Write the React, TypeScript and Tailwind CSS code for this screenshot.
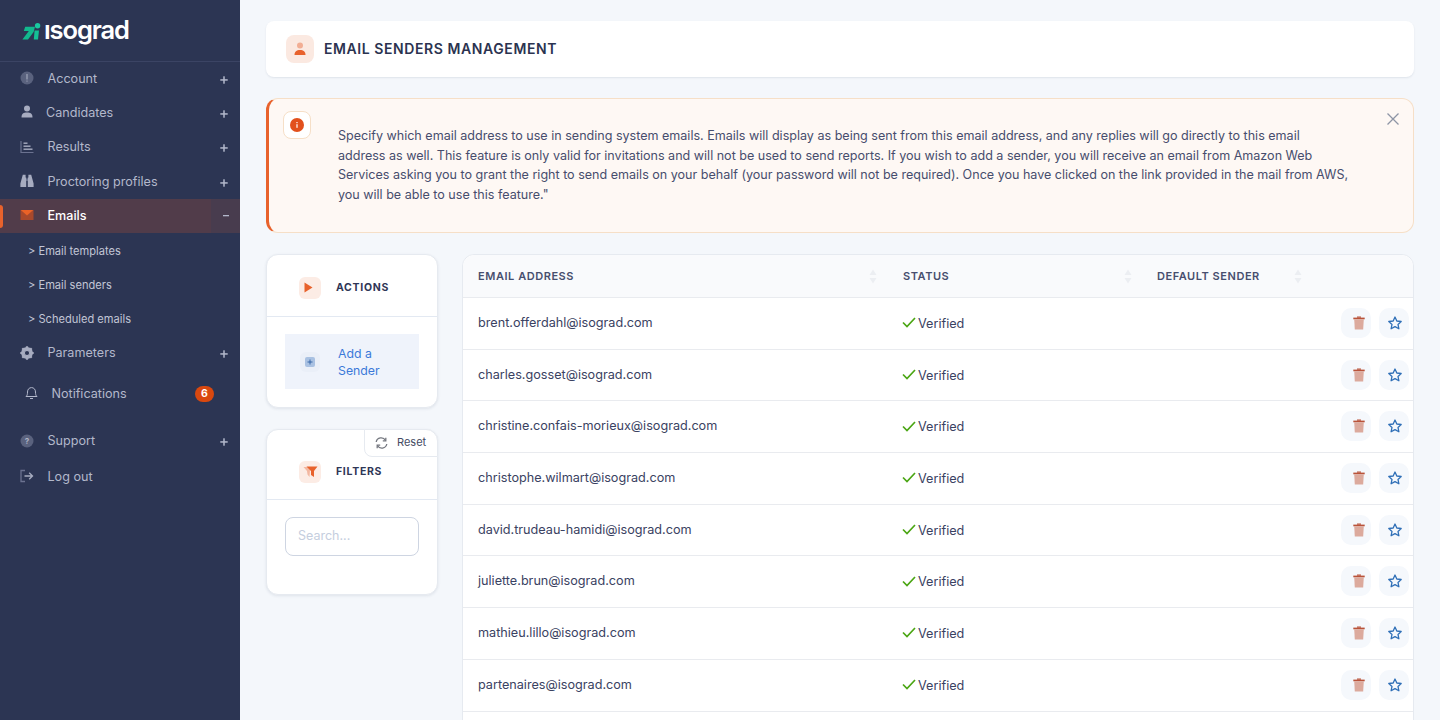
import React from "react";

const Plus = () => (
  <svg width="8" height="8" viewBox="0 0 8 8" className="mt-[1px] mr-[1px] shrink-0">
    <rect x="0.3" y="3.2" width="7.4" height="1.5" fill="currentColor" />
    <rect x="3.25" y="0.3" width="1.5" height="7.4" fill="currentColor" />
  </svg>
);

const Logo = () => (
  <div className="flex items-center">
    <svg width="19" height="17" viewBox="0 0 19 17" className="mt-[3px] mr-[3px] shrink-0">
      <circle cx="15.6" cy="2.8" r="2.7" fill="#19c9a0" />
      <path d="M3.2 3.8 H13 L11.6 9 L6 16.5 H0.4 L6.8 8 H1.8 Z" fill="#12b98e" />
      <path d="M12.6 7.4 H17 L16 16.5 H11.8 Z" fill="#14c096" />
    </svg>
    <span className="text-[25.5px] leading-none font-semibold tracking-[-1.1px] text-white">ısograd</span>
  </div>
);

const Svg = ({ children, s = 14 }: { children: React.ReactNode; s?: number }) => (
  <svg width={s} height={s} viewBox="0 0 14 14" className="shrink-0">
    {children}
  </svg>
);

const icons: Record<string, React.ReactNode> = {
  info: (
    <Svg>
      <circle cx="7" cy="7" r="6.5" fill="#5a627e" />
      <rect x="6.5" y="3" width="1" height="5.5" fill="#aeb3c6" />
      <rect x="6.5" y="9.6" width="1" height="1" fill="#aeb3c6" />
    </Svg>
  ),
  user: (
    <Svg>
      <circle cx="7" cy="3.4" r="3" fill="#a7acc0" />
      <path d="M1.5 12.5 C1.5 8.5 3.5 7.5 7 7.5 C10.5 7.5 12.5 8.5 12.5 12.5 Z" fill="#a7acc0" />
    </Svg>
  ),
  chart: (
    <Svg>
      <path d="M1 1 V12.5 H13.5" stroke="#6b7290" strokeWidth="1.2" fill="none" />
      <rect x="3.5" y="2.5" width="4" height="1.4" fill="#a7acc0" />
      <rect x="3.5" y="5.5" width="7" height="1.4" fill="#a7acc0" />
      <rect x="3.5" y="8.5" width="9" height="1.4" fill="#a7acc0" />
    </Svg>
  ),
  binoculars: (
    <Svg>
      <path d="M2.8 0.8 H5.6 V3.6 H6.2 V13 H0.4 V9.5 Z" fill="#a7acc0" />
      <path d="M11.2 0.8 H8.4 V3.6 H7.8 V13 H13.6 V9.5 Z" fill="#a7acc0" />
      <rect x="6.2" y="4.5" width="1.6" height="2.5" fill="#777e98" />
    </Svg>
  ),
  mail: (
    <Svg>
      <path d="M0.5 2 H13.5 V12 H0.5 Z" fill="#a8492c" />
      <path d="M0.8 2 H13.2 L7 7.6 Z" fill="#ea6227" />
    </Svg>
  ),
  gear: (
    <Svg>
      <circle cx="7" cy="7" r="4.5" fill="none" stroke="#a7acc0" strokeWidth="2.8" />
      <path
        d="M7 0.3 V13.7 M0.3 7 H13.7 M2.3 2.3 L11.7 11.7 M11.7 2.3 L2.3 11.7"
        stroke="#a7acc0"
        strokeWidth="2.2"
      />
      <circle cx="7" cy="7" r="2.1" fill="#2c3553" />
    </Svg>
  ),
  help: (
    <Svg>
      <circle cx="7" cy="7" r="6.5" fill="#5a627e" />
      <text x="7" y="10" textAnchor="middle" fontSize="8" fontWeight="700" fill="#aeb3c6" fontFamily="Inter, sans-serif">
        ?
      </text>
    </Svg>
  ),
  logout: (
    <Svg>
      <path d="M5 1.5 H1 V12.5 H5" stroke="#6b7290" strokeWidth="1.3" fill="none" />
      <path d="M4.5 7 H12.5 M9.2 3.8 L12.5 7 L9.2 10.2" stroke="#a7acc0" strokeWidth="1.3" fill="none" />
    </Svg>
  ),
};

const NavItem = ({ icon, label, tight = false }: { icon: string; label: string; tight?: boolean }) => (
  <div className="flex h-[34.3px] items-center pr-[11px] pl-5 text-[#b3b8cb]">
    <span className="mb-[2px] shrink-0">{icons[icon]}</span>
    <span className={tight ? "ml-[12px] flex-1 text-[12.6px]" : "ml-[13.5px] flex-1 text-[12.6px]"}>{label}</span>
    <Plus />
  </div>
);

const SubItem = ({ label }: { label: string }) => (
  <div className="flex h-[34px] items-center pl-[28px] text-[11.1px] text-[#c2c6d6]">&gt; {label}</div>
);

const Sidebar = () => (
  <aside className="flex h-[720px] w-[240px] shrink-0 flex-col bg-[#2c3553]">
    <div className="flex h-[62px] items-center border-b border-[#3b4464] pb-[1px] pl-[22px]">
      <Logo />
    </div>
    <div>
      <NavItem icon="info" label="Account" />
      <NavItem icon="user" label="Candidates" tight />
      <NavItem icon="chart" label="Results" />
      <NavItem icon="binoculars" label="Proctoring profiles" />
      <div className="relative flex h-[34.3px] items-center bg-[#513c4a] pl-5 text-white">
        <span className="absolute top-[6px] left-0 h-[23px] w-[3px] rounded-r-sm bg-[#e8622c]" />
        <span className="mb-[2px] shrink-0">{icons.mail}</span>
        <span className="ml-[13.5px] flex-1 text-[12.6px] font-medium">Emails</span>
        <span className="flex h-full w-[29px] items-center justify-center bg-[#483c4e] text-[#b3b8cb]">
          <svg width="6" height="2" viewBox="0 0 6 2">
            <rect width="6" height="1.3" fill="currentColor" />
          </svg>
        </span>
      </div>
      <div className="pt-[1px]">
        <SubItem label="Email templates" />
        <SubItem label="Email senders" />
        <SubItem label="Scheduled emails" />
      </div>
      <NavItem icon="gear" label="Parameters" />
      <div className="mt-[6px] flex h-[34px] items-center pr-[26px] pl-[25px] text-[#b3b8cb]">
        <svg width="13" height="14" viewBox="0 0 13 14" fill="none" stroke="#b3b8cb" strokeWidth="1" className="mb-[1px] shrink-0">
          <path d="M1 10.5 C2.3 9.5 2.5 8 2.5 6 C2.5 3.4 4.2 1.6 6.5 1.6 C8.8 1.6 10.5 3.4 10.5 6 C10.5 8 10.7 9.5 12 10.5 Z" />
          <path d="M5 12.5 H8" />
        </svg>
        <span className="mt-[1px] ml-[13.5px] flex-1 text-[12.6px]">Notifications</span>
        <span className="flex h-4 w-[19px] items-center justify-center rounded-full bg-[#d9480f] text-[10.5px] font-bold text-white">6</span>
      </div>
      <div className="mt-[14px]">
        <NavItem icon="help" label="Support" />
      </div>
      <div className="flex h-[34.3px] items-center pl-5 text-[#b3b8cb]">
        {icons.logout}
        <span className="mt-[2px] ml-[13.5px] text-[12.6px]">Log out</span>
      </div>
    </div>
  </aside>
);

const emails = [
  "brent.offerdahl@isograd.com",
  "charles.gosset@isograd.com",
  "christine.confais-morieux@isograd.com",
  "christophe.wilmart@isograd.com",
  "david.trudeau-hamidi@isograd.com",
  "juliette.brun@isograd.com",
  "mathieu.lillo@isograd.com",
  "partenaires@isograd.com",
];

const Sort = () => (
  <svg width="8" height="15" viewBox="0 0 8 15" className="shrink-0">
    <path d="M4 0.5 L7.5 6 H0.5 Z" fill="#eceef2" />
    <path d="M4 14.5 L7.5 9 H0.5 Z" fill="#eceef2" />
  </svg>
);

const Row = ({ email }: { email: string }) => (
  <div className="flex h-[51.7px] items-center border-b border-[#e9ebef] text-[12.65px] text-[#3a4262]">
    <div className="w-[424px] pl-[15px]">{email}</div>
    <div className="flex w-[254px] items-center pt-[2px] pl-[15px]">
      <svg width="14" height="11" viewBox="0 0 14 11" fill="none" stroke="#4ba614" strokeWidth="1.7" className="mr-[2px] mb-[3px] shrink-0">
        <path d="M1 5.5 L5 9.5 L13 1" />
      </svg>
      Verified
    </div>
    <div className="flex flex-1 justify-end gap-[8px] pr-[4px] pb-[1px]">
      <span className="flex h-[30px] w-[30px] items-center justify-center rounded-[10px] bg-[#f5f8fc] pl-[6px]">
        <svg width="12" height="14" viewBox="0 0 12 14">
          <rect x="0.3" y="1.6" width="11.4" height="1.7" fill="#b9533a" />
          <rect x="4" y="0.5" width="4" height="1.2" fill="#b9533a" />
          <path d="M1.2 3.3 H10.8 L10.2 13.5 H1.8 Z" fill="#dcaa9d" />
        </svg>
      </span>
      <span className="flex h-[30px] w-[30px] items-center justify-center rounded-[10px] bg-[#f5f8fc] pl-[1px]">
        <svg width="14" height="14" viewBox="0 0 14 14" fill="none" stroke="#2f6fb7" strokeWidth="1.3" strokeLinejoin="round">
          <path d="M7 1 L8.8 5 L13.2 5.5 L10 8.4 L10.9 12.8 L7 10.6 L3.1 12.8 L4 8.4 L0.8 5.5 L5.2 5 Z" />
        </svg>
      </span>
    </div>
  </div>
);

const Head = ({ label, w, sortRight }: { label: string; w: string; sortRight: string }) => (
  <div className={`flex items-center pl-[15px] ${w} ${sortRight}`}>
    <span className="flex-1 text-[11px] font-semibold tracking-[0.55px] text-[#474e6e]">{label}</span>
    <Sort />
  </div>
);

const Table = () => (
  <div className="min-w-0 flex-1 rounded-t-xl border border-[#e6eaf0] bg-white">
    <div className="flex h-[43px] items-center rounded-t-xl border-b border-[#e9ebef] bg-[#f9fafc]">
      <Head label="EMAIL ADDRESS" w="w-[425px]" sortRight="pr-[11px]" />
      <Head label="STATUS" w="w-[254px]" sortRight="pr-[10px]" />
      <Head label="DEFAULT SENDER" w="w-[170px]" sortRight="pr-[10px]" />
    </div>
    {emails.map((e) => (
      <Row key={e} email={e} />
    ))}
    <div className="h-[52px]" />
  </div>
);

const CardHead = ({ icon, label }: { icon: React.ReactNode; label: string }) => (
  <div className="flex items-center pl-[32px]">
    <span className="flex h-[22px] w-[22px] items-center justify-center rounded-md bg-[#fcece5]">{icon}</span>
    <span className="ml-[15px] text-[10.5px] font-bold tracking-[0.7px] text-[#2f3656]">{label}</span>
  </div>
);

const LeftColumn = () => (
  <div className="flex w-[172px] shrink-0 flex-col gap-[21px]">
    <div className="h-[154px] rounded-xl border border-[#e6eaf0] bg-white shadow-[0_1px_3px_rgba(40,55,90,0.1)]">
      <div className="flex h-[62px] items-center border-b border-[#e3e9f2] pt-[4px]">
        <CardHead
          label="ACTIONS"
          icon={
            <svg width="9" height="11" viewBox="0 0 9 11" className="mr-[3px]">
              <path d="M0.5 0.5 L8.5 5.5 L0.5 10.5 Z" fill="#e8622c" />
            </svg>
          }
        />
      </div>
      <div className="mx-[18px] mt-[17px] flex h-[55px] items-center bg-[#eff3fb]">
        <span className="ml-[15px] flex h-[20px] w-[20px] shrink-0 items-center justify-center rounded-md bg-[#eaeff8]">
          <span className="flex h-[10px] w-[10px] items-center justify-center rounded-[2px] bg-[#a9c1e2] text-[#2d5fa3]">
            <svg width="6" height="6" viewBox="0 0 6 6">
              <path d="M3 0.5 V5.5 M0.5 3 H5.5" stroke="currentColor" strokeWidth="0.9" />
            </svg>
          </span>
        </span>
        <span className="ml-[18px] text-[12.3px] leading-[17px] text-[#3b79d9]">
          Add a
          <br />
          Sender
        </span>
      </div>
    </div>
    <div className="relative h-[166px] rounded-xl border border-[#e6eaf0] bg-white shadow-[0_1px_3px_rgba(40,55,90,0.1)]">
      <div className="absolute -top-px -right-px flex h-[28px] w-[74px] items-center rounded-tr-xl rounded-bl-lg border border-[#e6eaf0] bg-white pb-[1px] pl-[10px] text-[11px] text-[#454b63]">
        <svg width="13" height="12" viewBox="0 0 13 12" fill="none" stroke="#74777f" strokeWidth="1.3" className="mr-[9px] shrink-0">
          <path d="M1.2 5 A5 5 0 0 1 10.5 3.5 M11.8 7 A5 5 0 0 1 2.5 8.5" />
          <path d="M10.8 0.8 V3.8 H7.8 M2.2 11.2 V8.2 H5.2" />
        </svg>
        Reset
      </div>
      <div className="flex h-[70px] items-center border-b border-[#e3e9f2] pt-[14px]">
        <CardHead
          label="FILTERS"
          icon={
            <svg width="15" height="12" viewBox="0 0 15 12">
              <path d="M0.5 1 H8 L7 4 L6.5 11 L4.5 8.5 L4 5 Z" fill="#f3b7a0" />
              <path d="M3.5 0.5 H14.5 L11 5 V11 L8 9 V5 Z" fill="#e8622c" />
            </svg>
          }
        />
      </div>
      <div className="mx-[18px] mt-[17px] flex h-[39px] items-center rounded-lg border border-[#ced5e2] pl-[12px] text-[12.5px] text-[#c5cede]">
        Search...
      </div>
    </div>
  </div>
);

export default function App() {
  return (
    <div className="flex h-[720px] w-[1440px] overflow-hidden bg-[#f4f7fb] font-['Inter',sans-serif]">
      <Sidebar />
      <main className="flex min-w-0 flex-1 flex-col px-[26px] pt-[21px]">
        <div className="flex h-[56px] shrink-0 items-center rounded-lg bg-white pl-[20px] shadow-[0_1px_2px_rgba(40,55,90,0.1)]">
          <span className="flex h-[28px] w-[28px] items-center justify-center rounded-lg bg-[#fbe9e1]">
            <svg width="12" height="14" viewBox="0 0 12 14">
              <circle cx="6" cy="3.5" r="3" fill="#f2ae94" />
              <path d="M0.5 13 C0.5 9.5 2.5 8 6 8 C9.5 8 11.5 9.5 11.5 13 Z" fill="#e8622c" />
            </svg>
          </span>
          <h1 className="mb-[2px] ml-[10px] text-[14px] font-semibold tracking-[0.58px] text-[#2b3350]">EMAIL SENDERS MANAGEMENT</h1>
        </div>
        <div className="relative mt-[21px] h-[135px] shrink-0 rounded-xl border border-l-[3px] border-[#f6dfc7] border-l-[#e8622c] bg-[#fef8f4] pt-[27px] pl-[69px] text-[12.55px] leading-[19.7px] whitespace-nowrap text-[#474d6d]">
          <span className="absolute top-[12px] left-[14px] flex h-[28px] w-[28px] items-center justify-center rounded-lg border border-[#f6dfc7] bg-white">
            <svg width="14" height="14" viewBox="0 0 14 14">
              <circle cx="7" cy="7" r="7" fill="#e2501c" />
              <rect x="6.4" y="4" width="1.2" height="1.2" fill="#fff" />
              <rect x="6.4" y="6.2" width="1.2" height="3.6" fill="#fff" />
            </svg>
          </span>
          <svg width="12" height="12" viewBox="0 0 12 12" stroke="#8e95a5" strokeWidth="1.3" className="absolute top-[14px] right-[14px]">
            <path d="M0.5 0.5 L11.5 11.5 M11.5 0.5 L0.5 11.5" />
          </svg>
          Specify which email address to use in sending system emails. Emails will display as being sent from this email address, and any replies will go directly to this email
          <br />
          address as well. This feature is only valid for invitations and will not be used to send reports. If you wish to add a sender, you will receive an email from Amazon Web
          <br />
          Services asking you to grant the right to send emails on your behalf (your password will not be required). Once you have clicked on the link provided in the mail from AWS,
          <br />
          you will be able to use this feature."
        </div>
        <div className="mt-[21px] flex gap-[24px]">
          <LeftColumn />
          <Table />
        </div>
      </main>
    </div>
  );
}
